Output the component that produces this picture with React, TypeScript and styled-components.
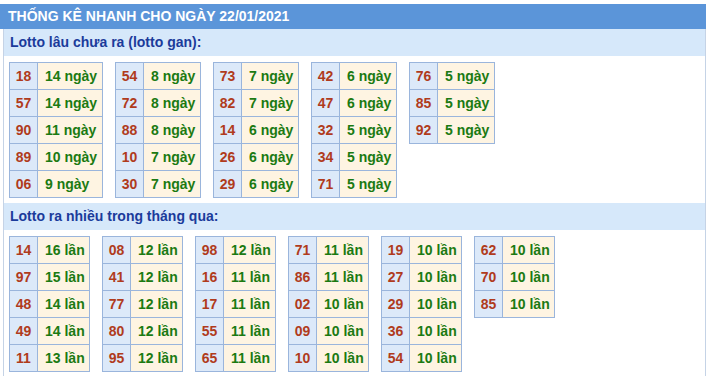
import styled, {createGlobalStyle} from "styled-components";

const GlobalStyle = createGlobalStyle`
    body {
        margin: 0;
        padding-top: 4px;
        background: #ffffff;
        font-family: "Liberation Sans", Arial, sans-serif;
    }
`;

const Wrapper = styled.div`
    width: 706px;
`;

const Header = styled.div`
    height: 25px;
    background: #5b95d9;
    color: #ffffff;
    font-size: 14px;
    font-weight: bold;
    line-height: 25px;
    padding-left: 8px;
`;

const Body = styled.div`
    margin-left: 3px;
    border-left: 1px solid #c5d3e6;
    border-right: 1px solid #c5d3e6;
    padding-bottom: 4px;
`;

const SubHeader = styled.div`
    height: 27px;
    background: #d6e8fa;
    color: #1b3b9b;
    font-size: 14px;
    font-weight: bold;
    line-height: 27px;
    padding-left: 6px;
`;

const TableRow = styled.div`
    display: flex;
    align-items: flex-start;
    gap: 12px;
    padding: 6px 5px 5px;
`;

const Table = styled.table<{ $w: number }>`
    width: ${p => p.$w}px;
    table-layout: fixed;
    border-collapse: collapse;
    font-size: 14px;
    font-weight: bold;
`;

const NumCell = styled.td`
    width: 27px;
    height: 26px;
    padding: 0;
    text-align: center;
    background: #dce9f9;
    border: 1px solid #9ab5dc;
    color: #b03b1c;
`;

const ValueCell = styled.td`
    height: 26px;
    padding: 0 0 0 7px;
    background: #fef4e2;
    border: 1px solid #9ab5dc;
    color: #1b7a12;
    white-space: nowrap;
    overflow: hidden;
`;

type Entry = [string, string];

const ganTables: { w: number, rows: Entry[] }[] = [
    {w: 94, rows: [["18", "14"], ["57", "14"], ["90", "11"], ["89", "10"], ["06", "9"]]},
    {w: 86, rows: [["54", "8"], ["72", "8"], ["88", "8"], ["10", "7"], ["30", "7"]]},
    {w: 86, rows: [["73", "7"], ["82", "7"], ["14", "6"], ["26", "6"], ["29", "6"]]},
    {w: 86, rows: [["42", "6"], ["47", "6"], ["32", "5"], ["34", "5"], ["71", "5"]]},
    {w: 86, rows: [["76", "5"], ["85", "5"], ["92", "5"]]},
];

const nhieuTables: Entry[][] = [
    [["14", "16"], ["97", "15"], ["48", "14"], ["49", "14"], ["11", "13"]],
    [["08", "12"], ["41", "12"], ["77", "12"], ["80", "12"], ["95", "12"]],
    [["98", "12"], ["16", "11"], ["17", "11"], ["55", "11"], ["65", "11"]],
    [["71", "11"], ["86", "11"], ["02", "10"], ["09", "10"], ["10", "10"]],
    [["19", "10"], ["27", "10"], ["29", "10"], ["36", "10"], ["54", "10"]],
    [["62", "10"], ["70", "10"], ["85", "10"]],
];

const StatTable = ({rows, unit, w}: { rows: Entry[], unit: string, w: number }) => (
    <Table $w={w}>
        <tbody>
        {rows.map(([num, count]) => (
            <tr key={num}>
                <NumCell>{num}</NumCell>
                <ValueCell>{count} {unit}</ValueCell>
            </tr>
        ))}
        </tbody>
    </Table>
);

const App = () => (
    <>
        <GlobalStyle/>
        <Wrapper>
            <Header>THỐNG KÊ NHANH CHO NGÀY 22/01/2021</Header>
            <Body>
                <SubHeader>Lotto lâu chưa ra (lotto gan):</SubHeader>
                <TableRow>
                    {ganTables.map((t, i) => (
                        <StatTable key={i} rows={t.rows} unit="ngày" w={t.w}/>
                    ))}
                </TableRow>
                <SubHeader>Lotto ra nhiều trong tháng qua:</SubHeader>
                <TableRow>
                    {nhieuTables.map((rows, i) => (
                        <StatTable key={i} rows={rows} unit="lần" w={81}/>
                    ))}
                </TableRow>
            </Body>
        </Wrapper>
    </>
);

export default App;
